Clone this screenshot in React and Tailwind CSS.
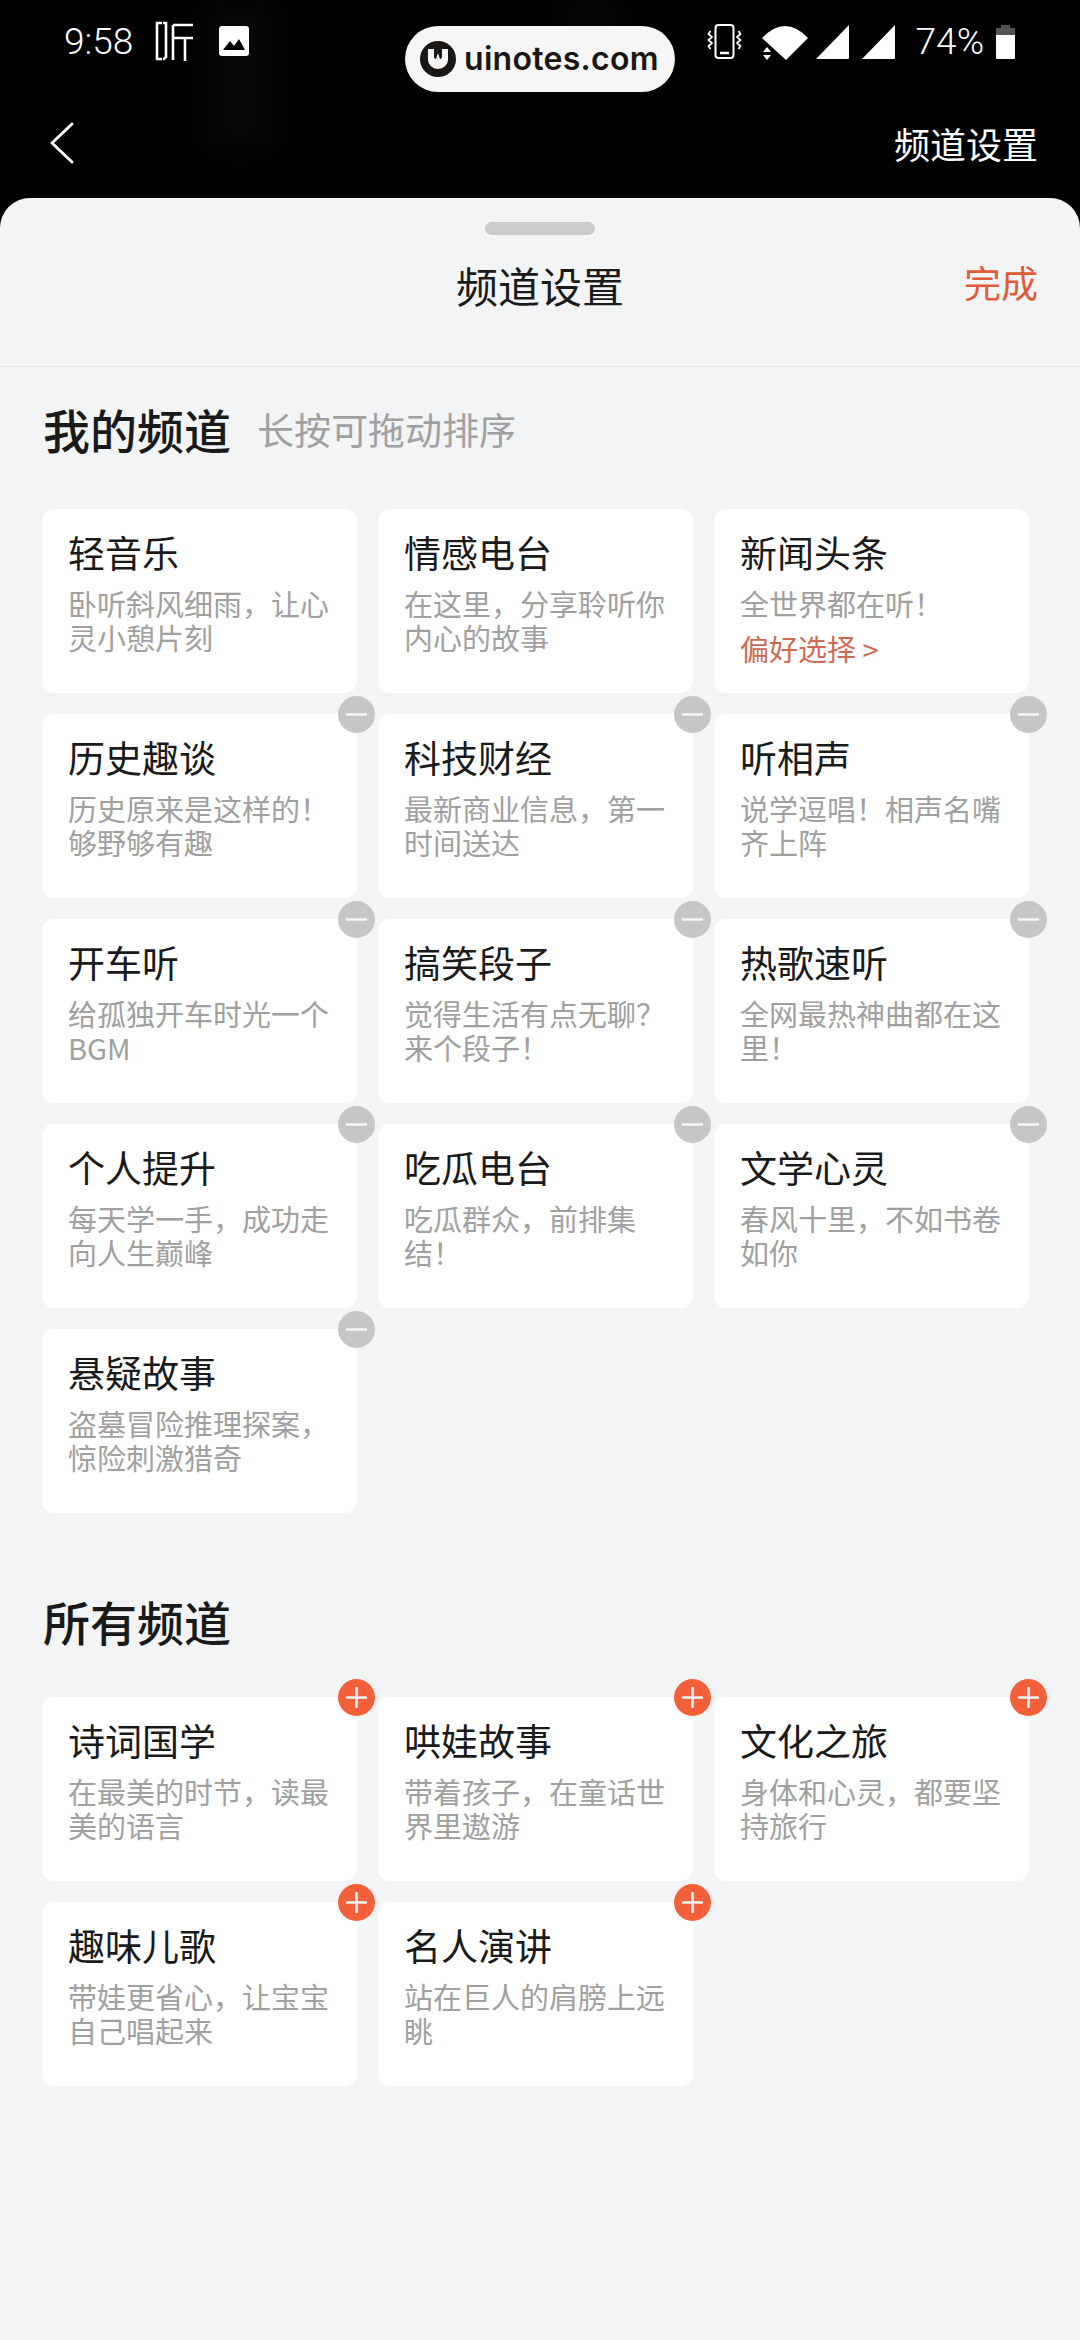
const CJK = { fontFamily: '"Noto Sans CJK SC", "Noto Sans", sans-serif' };

const mine = [
  ["轻音乐", "卧听斜风细雨，让心灵小憩片刻"],
  ["情感电台", "在这里，分享聆听你内心的故事"],
  ["新闻头条", "全世界都在听！", true],
  ["历史趣谈", "历史原来是这样的！够野够有趣"],
  ["科技财经", "最新商业信息，第一时间送达"],
  ["听相声", "说学逗唱！相声名嘴齐上阵"],
  ["开车听", "给孤独开车时光一个BGM"],
  ["搞笑段子", "觉得生活有点无聊？来个段子！"],
  ["热歌速听", "全网最热神曲都在这里！"],
  ["个人提升", "每天学一手，成功走向人生巅峰"],
  ["吃瓜电台", "吃瓜群众，前排集结！"],
  ["文学心灵", "春风十里，不如书卷如你"],
  ["悬疑故事", "盗墓冒险推理探案，惊险刺激猎奇"],
];
const all = [
  ["诗词国学", "在最美的时节，读最美的语言"],
  ["哄娃故事", "带着孩子，在童话世界里遨游"],
  ["文化之旅", "身体和心灵，都要坚持旅行"],
  ["趣味儿歌", "带娃更省心，让宝宝自己唱起来"],
  ["名人演讲", "站在巨人的肩膀上远眺"],
];

function Badge({ kind }) {
  const plus = kind === "plus";
  return (
    <div className={`absolute top-[-18px] right-[-18px] w-[37px] h-[37px] rounded-full flex items-center justify-center ${plus ? "bg-[#f4603a]" : "bg-[#c6c6c6]"}`}>
      <svg width="21" height="21" viewBox="0 0 21 21">
        <path d={plus ? "M1 10.5h19M10.5 1v19" : "M0 10.5h21"} stroke="#f6f6f6" strokeWidth="2.6" strokeLinecap="round" />
      </svg>
    </div>
  );
}

function Card({ title, sub, link, badge }) {
  return (
    <div className="relative h-[184px] bg-white rounded-[12px] pl-[26px] pr-[24px] pt-[21px]">
      {badge && <Badge kind={badge} />}
      <div className="text-[37px] leading-[44px] text-[#1a1a1a] whitespace-nowrap">{title}</div>
      <div className="mt-[13px] text-[29px] leading-[33.5px] text-[#a0a0a0]">{sub}</div>
      {link && <div className="mt-[9px] text-[29px] leading-[36px] text-[#cf6a52]">偏好选择 &gt;</div>}
    </div>
  );
}

function StatusLeft() {
  return (
    <div className="flex items-center text-white">
      <span className="text-[37px] leading-[40px] font-light w-[91px]" style={{ fontFamily: "Roboto, sans-serif" }}>9:58</span>
      <svg width="40" height="40" viewBox="0 0 40 40" fill="none" stroke="white" strokeWidth="2.6" className="mt-[-2px]">
        <path d="M7 2H2v36h5M8 2h3v34l-2 2H8" />
        <path d="M18 4h20M18 4v35M18 17h20M30 17v23" />
      </svg>
      <svg width="30" height="30" viewBox="0 0 30 30" className="ml-[24px] mt-[-2px]">
        <rect width="30" height="30" rx="3" fill="white" />
        <path d="M4 24l7-9 4 5 5-7 6 11z" fill="black" />
      </svg>
    </div>
  );
}

function StatusRight() {
  return (
    <div className="flex items-center text-white">
      <svg width="35" height="36" viewBox="0 0 35 36" fill="none" stroke="white" strokeWidth="2">
        <rect x="8.5" y="1" width="18" height="33" rx="3" />
        <path d="M13 29h9" strokeWidth="2.5" />
        <path d="M3.500 7l-2 3 3.500 3-3.500 3 3.500 3-3.500 3 2 3M31.500 7l2 3-3.500 3 3.500 3-3.500 3 3.500 3-2 3" strokeWidth="1.8" strokeLinejoin="round" />
      </svg>
      <svg width="48" height="36" viewBox="0 0 48 36" className="ml-[19px]">
        <path d="M1 14Q24-10 47 14L25 36z" fill="white" />
        <path d="M2 28l4-5 4 5zM2 31h8l-4 5z" fill="white" />
      </svg>
      <svg width="34" height="36" viewBox="0 0 34 36" className="ml-[7px]">
        <path d="M33 1v33a1 1 0 0 1-1 1H0z" fill="white" />
      </svg>
      <svg width="34" height="36" viewBox="0 0 34 36" className="ml-[12px]">
        <path d="M33 1v33a1 1 0 0 1-1 1H0z" fill="white" />
      </svg>
      <span className="ml-[20px] text-[37px] leading-[40px] font-light" style={{ fontFamily: "Roboto, sans-serif" }}>74%</span>
      <svg width="19" height="34" viewBox="0 0 19 34" className="ml-[12px]">
        <path d="M5 0h9v3h5v9H0V3h5z" fill="#555" />
        <path d="M0 10h19v23a1 1 0 0 1-1 1H1a1 1 0 0 1-1-1z" fill="white" />
      </svg>
    </div>
  );
}

export default function App() {
  return (
    <div className="relative w-[1080px] h-[2340px] bg-black flex flex-col overflow-hidden" style={CJK}>
      <div className="absolute left-[205px] top-0 w-[70px] h-[150px] bg-[#120f0c] blur-[18px] opacity-50" />
      <div className="absolute left-[560px] top-0 w-[60px] h-[30px] bg-[#120f0c] blur-[12px] opacity-50" />

      <div className="relative h-[198px] shrink-0">
        <div className="flex justify-between items-start pl-[64px] pr-[65px] pt-[22px]">
          <StatusLeft />
          <StatusRight />
        </div>
        <div className="flex justify-between items-center pl-[49px] pr-[42px] mt-[59px]">
          <svg width="28" height="44" viewBox="0 0 28 44" fill="none" stroke="white" strokeWidth="3" strokeLinecap="round" strokeLinejoin="round">
            <path d="M23 3L3 22l20 19" />
          </svg>
          <span className="text-[36px] leading-[44px] text-white">频道设置</span>
        </div>
      </div>

      {/* watermark pill */}
      <div className="absolute left-[405px] top-[26px] w-[270px] h-[66px] bg-[#f6f6f6] rounded-full flex items-center pl-[15px]">
        <svg width="36" height="36" viewBox="0 0 36 36">
          <circle cx="18" cy="18" r="18" fill="#1a1614" />
          <path d="M8 8h6v7q0 3 2 3l2-6 2 6q2 0 2-3V8h6v11a10 9 0 0 1-20 0z" fill="#f6f6f6" />
        </svg>
        <span className="ml-[8px] text-[32px] leading-[40px] font-semibold text-[#1a1614] tracking-[0.3px]" style={{ fontFamily: "Inter, sans-serif" }}>uinotes.com</span>
      </div>

      <div className="flex-1 bg-[#f3f4f6] rounded-t-[30px] flex flex-col relative">
        <div className="relative h-[169px] border-b border-[#e2e3e5] shrink-0 flex flex-col items-center pt-[24px]">
          <div className="w-[110px] h-[13px] rounded-full bg-[#cbcbcb]" />
          <div className="mt-[22px] text-[42px] leading-[56px] text-[#1a1a1a]">频道设置</div>
          <div className="absolute right-[42px] top-[59px] text-[37px] leading-[50px] text-[#e05c38]">完成</div>
        </div>

        <div className="flex pl-[43px] pt-[32px] h-[142px] items-start">
          <span className="text-[47px] leading-[60px] font-medium text-[#1a1a1a]">我的频道</span>
          <span className="ml-[26px] text-[37px] leading-[60px] text-[#a0a0a0]">长按可拖动排序</span>
        </div>
        <div className="grid grid-cols-[315px_315px_315px] gap-[21px] pl-[42px]">
          {mine.map(([t, s, link], i) => (
            <Card key={t} title={t} sub={s} link={link} badge={i >= 3 ? "minus" : null} />
          ))}
        </div>

        <div className="pl-[43px] mt-[78px] h-[106px]">
          <span className="text-[47px] leading-[60px] font-medium text-[#1a1a1a]">所有频道</span>
        </div>
        <div className="grid grid-cols-[315px_315px_315px] gap-[21px] pl-[42px]">
          {all.map(([t, s]) => (
            <Card key={t} title={t} sub={s} badge="plus" />
          ))}
        </div>
      </div>
    </div>
  );
}
